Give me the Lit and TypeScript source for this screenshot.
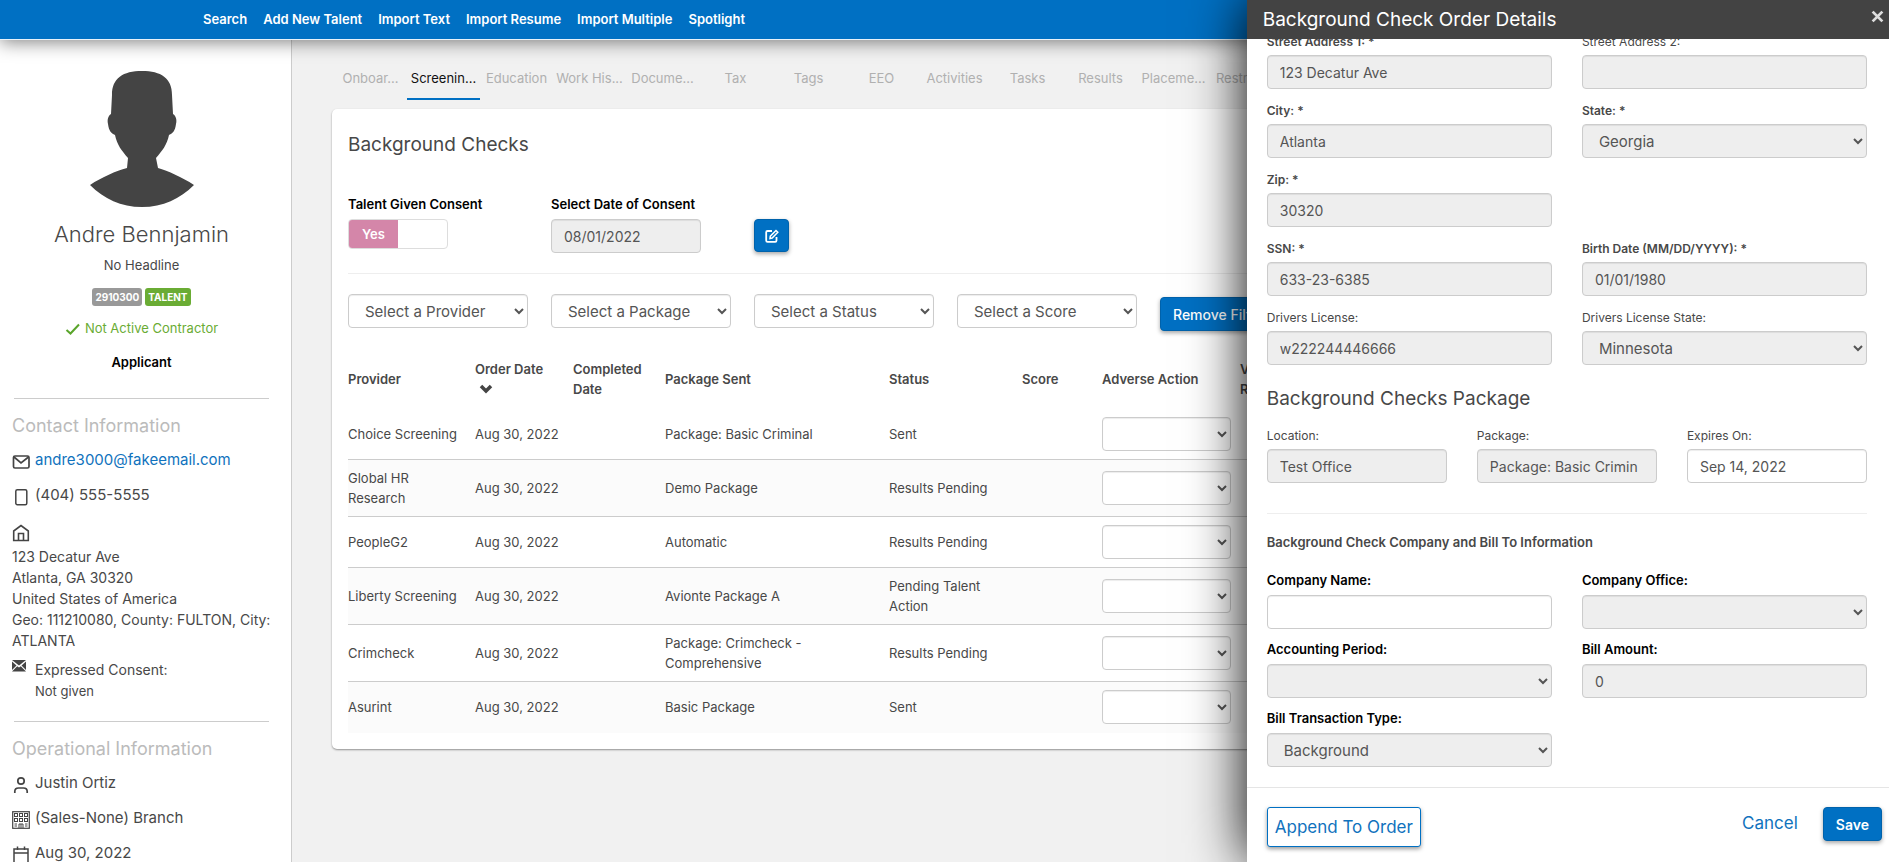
import { LitElement, html, css, svg, nothing } from "lit";
import { customElement } from "lit/decorators.js";

const NAV = ["Search", "Add New Talent", "Import Text", "Import Resume", "Import Multiple", "Spotlight"];

const TABS = [
  "Onboar...", "Screenin...", "Education", "Work His...", "Docume...", "Tax", "Tags", "EEO",
  "Activities", "Tasks", "Results", "Placeme...", "Restricti...",
];

const FILTERS = ["Select a Provider", "Select a Package", "Select a Status", "Select a Score"];

interface Check {
  provider: string;
  pkg: string;
  status: string;
}

const CHECKS: Check[] = [
  { provider: "Choice Screening", pkg: "Package: Basic Criminal", status: "Sent" },
  { provider: "Global HR Research", pkg: "Demo Package", status: "Results Pending" },
  { provider: "PeopleG2", pkg: "Automatic", status: "Results Pending" },
  { provider: "Liberty Screening", pkg: "Avionte Package A", status: "Pending Talent Action" },
  { provider: "Crimcheck", pkg: "Package: Crimcheck - Comprehensive", status: "Results Pending" },
  { provider: "Asurint", pkg: "Basic Package", status: "Sent" },
];

const controls = css`
  :host,
  * {
    box-sizing: border-box;
  }
  input,
  select {
    display: block;
    width: 100%;
    height: 34px;
    margin: 0;
    padding: 6px 12px;
    border: 1px solid #ccc;
    border-radius: 4px;
    background-color: #fff;
    box-shadow: inset 0 1px 1px rgba(0, 0, 0, 0.075);
    color: #555;
    font-family: inherit;
    font-size: 14px;
    line-height: 20px;
    opacity: 1;
  }
  select {
    font-size: 15px;
  }
  input:disabled,
  select:disabled {
    background-color: #eee;
    color: #555;
    opacity: 1;
  }
  button {
    font-family: inherit;
    cursor: pointer;
  }
  .primary {
    border: 1px solid #0062ab;
    border-radius: 4px;
    background: #0070c3;
    box-shadow: 0 2px 4px rgba(0, 0, 0, 0.35);
    color: #fff;
  }
  h1,
  h2,
  h3,
  p {
    margin: 0;
    font-weight: 400;
  }
  a {
    color: #1072bd;
    text-decoration: none;
  }
`;

@customElement("talent-sidebar")
export class TalentSidebar extends LitElement {
  static styles = [
    controls,
    css`
      :host {
        display: block;
        width: 292px;
        flex: none;
        padding: 31px 10px 0 12px;
        border-right: 1px solid #ccc;
        background: #fff;
        font-size: 14px;
        line-height: 21px;
      }
      .profile {
        display: flex;
        flex-direction: column;
        align-items: center;
        padding: 0 12px 6px 2px;
        text-align: center;
      }
      .avatar {
        display: block;
        width: 104px;
        height: 136px;
      }
      .name {
        margin-top: 13px;
        font-size: 22px;
        font-weight: 300;
        line-height: 28px;
      }
      .headline {
        margin-top: 7px;
        font-size: 13px;
      }
      .badges {
        display: flex;
        gap: 3px;
        margin-top: 12px;
      }
      .badge {
        padding: 0 3px;
        border-radius: 3px;
        background: #999;
        color: #fff;
        font-size: 10px;
        font-weight: 700;
        line-height: 18px;
      }
      .badge.green {
        background: #6aac34;
      }
      .contractor {
        display: flex;
        align-items: center;
        gap: 4px;
        margin-top: 12px;
        color: #6aac34;
        font-size: 13px;
      }
      .applicant {
        margin-top: 13px;
        color: #000;
        font-size: 13px;
        font-weight: 600;
      }
      .rule {
        margin: 19px 12px 0 2px;
        border: 0;
        border-top: 1px solid #ccc;
      }
      .section {
        margin: 15px 0 11px;
        color: #bbb;
        font-size: 18px;
        line-height: 24px;
      }
      .item {
        display: flex;
        height: 21px;
        margin-bottom: 14px;
        font-size: 15px;
      }
      .icon {
        display: block;
        flex: none;
        width: 18px;
        height: 18px;
        margin: 4px 5px 0 0;
        fill: none;
        stroke: #444;
        stroke-width: 2;
      }
      .home {
        margin: 19px 0 4px;
      }
      .consent {
        display: flex;
        margin-top: 8px;
      }
      .consent .icon {
        margin-top: 0;
      }
      .small {
        font-size: 13px;
      }
    `,
  ];

  render() {
    return html`
      <div class="profile">
        <svg class="avatar" viewBox="0 0 104 136" aria-hidden="true">
          <path
            fill="#444"
            d="M52 0C33 0 22 7 22 24L21 43C18 45 17 49 18 53C19 60 21 62 25 64C27 74 32 80 38 87L37 97C26 100 12 106 0 114C14 128 31 136 52 136S90 128 104 114C92 106 78 100 68 97L66 87C72 80 77 74 79 64C83 62 85 60 86 53C87 49 86 45 83 43L82 24C82 7 71 0 52 0Z"
          />
        </svg>
        <h1 class="name">Andre Bennjamin</h1>
        <p class="headline">No Headline</p>
        <div class="badges">
          <span class="badge">2910300</span>
          <span class="badge green">TALENT</span>
        </div>
        <div class="contractor">
          <svg width="16" height="12" viewBox="0 0 16 12" aria-hidden="true">
            <path d="M1.5 7L5.5 10.5L14 1.5" fill="none" stroke="#5aa52b" stroke-width="2" />
          </svg>
          <span>Not Active Contractor</span>
        </div>
        <p class="applicant">Applicant</p>
      </div>
      <hr class="rule" />
      <h2 class="section">Contact Information</h2>
      <div class="item">
        <svg class="icon" viewBox="0 0 18 18" aria-hidden="true">
          <rect x="1.500" y="3" width="15.500" height="12" rx="1.500" stroke-width="1.700" />
          <path d="M2 4L9 10L16.500 4" stroke-width="1.700" />
        </svg>
        <a href="mailto:andre3000@fakeemail.com">andre3000@fakeemail.com</a>
      </div>
      <div class="item">
        <svg class="icon" viewBox="0 0 18 18" aria-hidden="true">
          <rect x="3.800" y="1.700" width="11" height="15" rx="1.500" stroke-width="1.500" />
        </svg>
        <span>(404) 555-5555</span>
      </div>
      <div class="address">
        <svg class="icon home" viewBox="0 0 18 18" aria-hidden="true">
          <path d="M1.700 16.500V7L9 1.500L16.300 7V16.500Z" stroke-width="1.600" />
          <path d="M6.500 16.500V9.500H11.500V16.500" stroke-width="1.600" />
        </svg>
        123 Decatur Ave<br />Atlanta, GA 30320<br />United States of America<br />Geo: 111210080, County:
        FULTON, City: ATLANTA
      </div>
      <div class="consent">
        <svg class="icon" viewBox="0 0 18 18" aria-hidden="true">
          <g stroke="none" fill="#444">
            <path d="M0 1H14L7 6.500Z" />
            <path d="M0 2.500L4.500 6.500L0 11Z" />
            <path d="M14 2.500L9.500 6.500L14 11Z" />
            <path d="M0 12.500L5.200 7.300L7 8.600L8.800 7.300L14 12.500Z" />
          </g>
        </svg>
        <div>Expressed Consent:<br /><span class="small">Not given</span></div>
      </div>
      <hr class="rule" />
      <h2 class="section">Operational Information</h2>
      <div class="item">
        <svg class="icon" viewBox="0 0 18 18" aria-hidden="true">
          <circle cx="9" cy="5" r="3.200" stroke-width="1.700" />
          <path d="M2.800 17V15.500Q2.800 12 6.500 12H11.500Q15.200 12 15.200 15.500V17" stroke-width="1.700" />
        </svg>
        <span>Justin Ortiz</span>
      </div>
      <div class="item">
        <svg class="icon" viewBox="0 0 18 18" aria-hidden="true">
          <rect x="0.700" y="0.700" width="16.600" height="16.600" stroke-width="1.200" />
          <g stroke-width="1">
            ${[2.5, 7.5, 12.5].map((x) => [2.5, 7.5].map((y) => svg`<rect x=${x} y=${y} width="3" height="3" />`))}
          </g>
          <path d="M2.500 13H5M13 13H15.500M2.500 15H5M13 15H15.500M7 17V13H11V17M9 13V17" stroke-width="1" />
        </svg>
        <span>(Sales-None) Branch</span>
      </div>
      <div class="item">
        <svg class="icon" viewBox="0 0 18 18" aria-hidden="true">
          <rect x="2" y="3" width="14" height="14" stroke-width="1.500" />
          <path d="M2 7H16M5.500 0.500V4M12.500 0.500V4" stroke-width="1.500" />
        </svg>
        <span>Aug 30, 2022</span>
      </div>
    `;
  }
}

@customElement("background-checks")
export class BackgroundChecks extends LitElement {
  static styles = [
    controls,
    css`
      :host {
        display: block;
        flex: 1;
        min-width: 0;
        padding: 22px 40px 0;
        overflow: hidden;
      }
      .tabs {
        display: flex;
        margin-left: 2px;
      }
      .tab {
        flex: none;
        width: 73px;
        height: 38px;
        padding: 4px 0 8px;
        border: 0;
        border-bottom: 2px solid transparent;
        background: none;
        color: #b0b0b0;
        font-size: 13px;
        line-height: 24px;
        text-align: center;
        white-space: nowrap;
      }
      .tab.active {
        border-color: #0070c3;
        color: #111;
      }
      .card {
        margin-top: 9px;
        padding: 22px 16px 16px;
        border-radius: 5px;
        background: #fff;
        box-shadow: 0 1px 2px rgba(0, 0, 0, 0.4);
      }
      .title {
        font-size: 19px;
        line-height: 28px;
      }
      .consent {
        display: flex;
        margin-top: 35px;
        padding-bottom: 20px;
        border-bottom: 1px solid #eee;
      }
      .slot {
        flex: none;
        width: 203px;
      }
      .label {
        display: block;
        margin-bottom: 5px;
        color: #000;
        font-size: 13px;
        font-weight: 600;
        line-height: 20px;
      }
      .date {
        width: 150px;
      }
      .switch {
        display: flex;
        width: 100px;
        height: 30px;
        padding: 0;
        border: 1px solid #ddd;
        border-radius: 4px;
        overflow: hidden;
        background: #fff;
      }
      .switch span {
        width: 49px;
        background: #d486a9;
        color: #fff;
        font-size: 13px;
        font-weight: 600;
        line-height: 28px;
        text-align: center;
      }
      .edit {
        display: flex;
        align-items: center;
        justify-content: center;
        width: 35px;
        height: 33px;
        margin-top: 25px;
        padding: 0;
      }
      .filters {
        display: flex;
        margin-top: 20px;
      }
      .filters select {
        width: 180px;
      }
      .remove {
        height: 34px;
        margin-top: 3px;
        padding: 0 12px;
        font-size: 14px;
        font-weight: 500;
        white-space: nowrap;
      }
      .grid {
        width: 100%;
        margin-top: 18px;
        border-collapse: separate;
        border-spacing: 0;
        table-layout: fixed;
        font-size: 13px;
        line-height: 20px;
      }
      .grid th {
        height: 60px;
        padding: 0 10px 0 0;
        font-weight: 600;
        text-align: left;
      }
      .grid td {
        padding: 8px 10px 8px 0;
        border-bottom: 1px solid #ccc;
      }
      .grid tbody tr:nth-child(even) {
        background: #fbfbfb;
      }
      .grid tbody tr:last-child td {
        border-bottom-color: transparent;
      }
      .grid select {
        width: 129px;
      }
      .sort {
        display: block;
        margin: 4px 0 4px 4px;
      }
      .provider {
        width: 127px;
      }
      .ordered {
        width: 98px;
      }
      .completed {
        width: 92px;
      }
      .package {
        width: 224px;
      }
      .status {
        width: 133px;
      }
      .score {
        width: 80px;
      }
      .adverse {
        width: 138px;
      }
    `,
  ];

  render() {
    return html`
      <nav class="tabs">
        ${TABS.map((t, i) => html`<button class="tab ${i === 1 ? "active" : ""}">${t}</button>`)}
      </nav>
      <section class="card">
        <h2 class="title">Background Checks</h2>
        <div class="consent">
          <div class="slot">
            <label class="label" for="given">Talent Given Consent</label>
            <button class="switch" id="given" role="switch" aria-checked="true"><span>Yes</span></button>
          </div>
          <div class="slot">
            <label class="label" for="date">Select Date of Consent</label>
            <input class="date" id="date" disabled value="08/01/2022" />
          </div>
          <button class="primary edit" aria-label="Edit">
            <svg width="14" height="14" viewBox="0 0 14 14" fill="none" stroke="#fff" stroke-width="1.800" aria-hidden="true">
              <path d="M7 2H2.500Q1.200 2 1.200 3.300V11.500Q1.200 12.800 2.500 12.800H10.200Q11.500 12.800 11.500 11.500V8" />
              <path d="M5 9.500L5.300 7.200L11 1.500L12.800 3.200L7.200 9L5 9.500Z" stroke-width="1.500" />
            </svg>
          </button>
        </div>
        <div class="filters">
          ${FILTERS.map(
            (f) => html`<div class="slot"><select aria-label=${f}><option>${f}</option></select></div>`,
          )}
          <button class="primary remove">Remove Filters</button>
        </div>
        <table class="grid">
          <thead>
            <tr>
              <th class="provider">Provider</th>
              <th class="ordered">
                Order Date
                <svg class="sort" width="14" height="12" viewBox="0 0 14 12" aria-hidden="true">
                  <path d="M2 3L7 8L12 3" fill="none" stroke="#444" stroke-width="3.500" />
                </svg>
              </th>
              <th class="completed">Completed Date</th>
              <th class="package">Package Sent</th>
              <th class="status">Status</th>
              <th class="score">Score</th>
              <th class="adverse">Adverse Action</th>
              <th>View<br />Report</th>
            </tr>
          </thead>
          <tbody>
            ${CHECKS.map(
              (c) => html`
                <tr>
                  <td>${c.provider}</td>
                  <td>Aug 30, 2022</td>
                  <td></td>
                  <td>${c.pkg}</td>
                  <td>${c.status}</td>
                  <td></td>
                  <td><select aria-label="Adverse action for ${c.provider}"></select></td>
                  <td></td>
                </tr>
              `,
            )}
          </tbody>
        </table>
      </section>
    `;
  }
}

interface Field {
  label: string;
  value?: string;
  select?: boolean;
  required?: boolean;
  enabled?: boolean;
  alone?: boolean;
}

const ADDRESS: Field[] = [
  { label: "Street Address 1: *", value: "123 Decatur Ave", required: true },
  { label: "Street Address 2:" },
  { label: "City: *", value: "Atlanta", required: true },
  { label: "State: *", value: "Georgia", required: true, select: true },
  { label: "Zip: *", value: "30320", required: true, alone: true },
  { label: "SSN: *", value: "633-23-6385", required: true },
  { label: "Birth Date (MM/DD/YYYY): *", value: "01/01/1980", required: true },
  { label: "Drivers License:", value: "w222244446666" },
  { label: "Drivers License State:", value: "Minnesota", select: true },
];

const PACKAGE: Field[] = [
  { label: "Location:", value: "Test Office" },
  { label: "Package:", value: "Package: Basic Crimin" },
  { label: "Expires On:", value: "Sep 14, 2022", enabled: true },
];

const BILLING: Field[] = [
  { label: "Company Name:", enabled: true },
  { label: "Company Office:", select: true },
  { label: "Accounting Period:", select: true },
  { label: "Bill Amount:", value: "0" },
  { label: "Bill Transaction Type:", value: "Background", select: true },
];

@customElement("order-drawer")
export class OrderDrawer extends LitElement {
  static styles = [
    controls,
    css`
      :host {
        position: absolute;
        top: 0;
        right: 0;
        bottom: 0;
        display: flex;
        flex-direction: column;
        width: 34%;
        background: #fff;
        box-shadow: 0 0 54px #000;
      }
      .head {
        display: flex;
        flex: none;
        align-items: center;
        justify-content: space-between;
        height: 39px;
        padding: 0 5px 0 16px;
        background: #434343;
        color: #fff;
      }
      .head h2 {
        font-size: 19px;
      }
      .close {
        display: flex;
        padding: 0 0 6px;
        border: 0;
        background: none;
      }
      .body {
        display: flex;
        flex: 1;
        flex-direction: column;
        justify-content: flex-end;
        min-height: 0;
        padding: 0 22px 10px 20px;
        overflow: hidden;
      }
      .pair,
      .triple {
        display: grid;
        flex: none;
        grid-template-columns: 1fr 1fr;
        column-gap: 30px;
      }
      .triple {
        grid-template-columns: 1fr 1fr 1fr;
      }
      .field {
        margin-bottom: 12px;
      }
      .alone {
        grid-column: 1 / -1;
        width: calc(50% - 15px);
      }
      .field label {
        display: block;
        margin-bottom: 3px;
        font-size: 12px;
        line-height: 20px;
        white-space: nowrap;
      }
      .field .required {
        font-weight: 600;
      }
      .billing .field {
        margin-bottom: 10px;
      }
      .billing .field label {
        margin-bottom: 5px;
        color: #000;
        font-size: 13px;
        font-weight: 600;
      }
      .title {
        margin: 8px 0 13px;
        font-size: 19px;
        line-height: 28px;
      }
      .subtitle {
        margin: 18px 0;
        padding-top: 18px;
        border-top: 1px solid #eee;
        font-size: 13px;
        font-weight: 600;
        line-height: 20px;
      }
      .foot {
        display: flex;
        flex: none;
        align-items: flex-start;
        height: 75px;
        padding: 19px 7px 0 20px;
        border-top: 1px solid #e5e5e5;
      }
      .append {
        height: 40px;
        padding: 0 7px;
        border: 1px solid #0070c3;
        border-radius: 3px;
        background: #fff;
        box-shadow: 0 2px 4px rgba(0, 0, 0, 0.4);
        color: #1072bd;
        font-size: 17px;
      }
      .cancel {
        margin: 0 25px 0 auto;
        font-size: 17px;
        line-height: 32px;
      }
      .save {
        height: 34px;
        padding: 0 12px;
        font-size: 14px;
        font-weight: 600;
      }
    `,
  ];

  private field(f: Field) {
    const id = f.label.replace(/\W/g, "");
    return html`
      <div class="field ${f.alone ? "alone" : ""}">
        <label for=${id} class=${f.required ? "required" : nothing}>${f.label}</label>
        ${f.select
          ? html`<select id=${id} ?disabled=${!f.enabled}>${f.value ? html`<option>${f.value}</option>` : nothing}</select>`
          : html`<input id=${id} ?disabled=${!f.enabled} value=${f.value ?? ""} />`}
      </div>
    `;
  }

  render() {
    return html`
      <header class="head">
        <h2>Background Check Order Details</h2>
        <button class="close" aria-label="Close">
          <svg width="13" height="13" viewBox="0 0 12 12" aria-hidden="true">
            <path d="M1.500 1.500L10.500 10.500M10.500 1.500L1.500 10.500" stroke="#ddd" stroke-width="2.600" />
          </svg>
        </button>
      </header>
      <div class="body">
        <div class="pair">${ADDRESS.map((f) => this.field(f))}</div>
        <h3 class="title">Background Checks Package</h3>
        <div class="triple">${PACKAGE.map((f) => this.field(f))}</div>
        <h3 class="subtitle">Background Check Company and Bill To Information</h3>
        <div class="pair billing">${BILLING.map((f) => this.field(f))}</div>
      </div>
      <footer class="foot">
        <button class="append">Append To Order</button>
        <a class="cancel" href="#">Cancel</a>
        <button class="primary save">Save</button>
      </footer>
    `;
  }
}

@customElement("app-root")
export class AppRoot extends LitElement {
  static styles = css`
    :host {
      position: relative;
      display: flex;
      flex-direction: column;
      height: 100vh;
      overflow: hidden;
      background: #f1f1f1;
      color: #484848;
      font-family: Inter, "Liberation Sans", sans-serif;
      font-size: 14px;
    }
    .bar {
      position: relative;
      z-index: 1;
      display: flex;
      flex: none;
      align-items: center;
      gap: 16px;
      height: 40px;
      padding: 0 203px 2px;
      border-bottom: 1px solid #e8f2fa;
      box-sizing: border-box;
      background: #0070c3;
      box-shadow: 0 2px 18px rgba(0, 0, 0, 0.5);
    }
    .bar a {
      color: #fff;
      font-size: 13px;
      font-weight: 600;
      text-decoration: none;
      white-space: nowrap;
    }
    .page {
      display: flex;
      flex: 1;
      min-height: 0;
    }
    order-drawer {
      z-index: 2;
    }
  `;

  render() {
    return html`
      <nav class="bar">${NAV.map((n) => html`<a href="#">${n}</a>`)}</nav>
      <div class="page">
        <talent-sidebar></talent-sidebar>
        <background-checks></background-checks>
      </div>
      <order-drawer></order-drawer>
    `;
  }
}
